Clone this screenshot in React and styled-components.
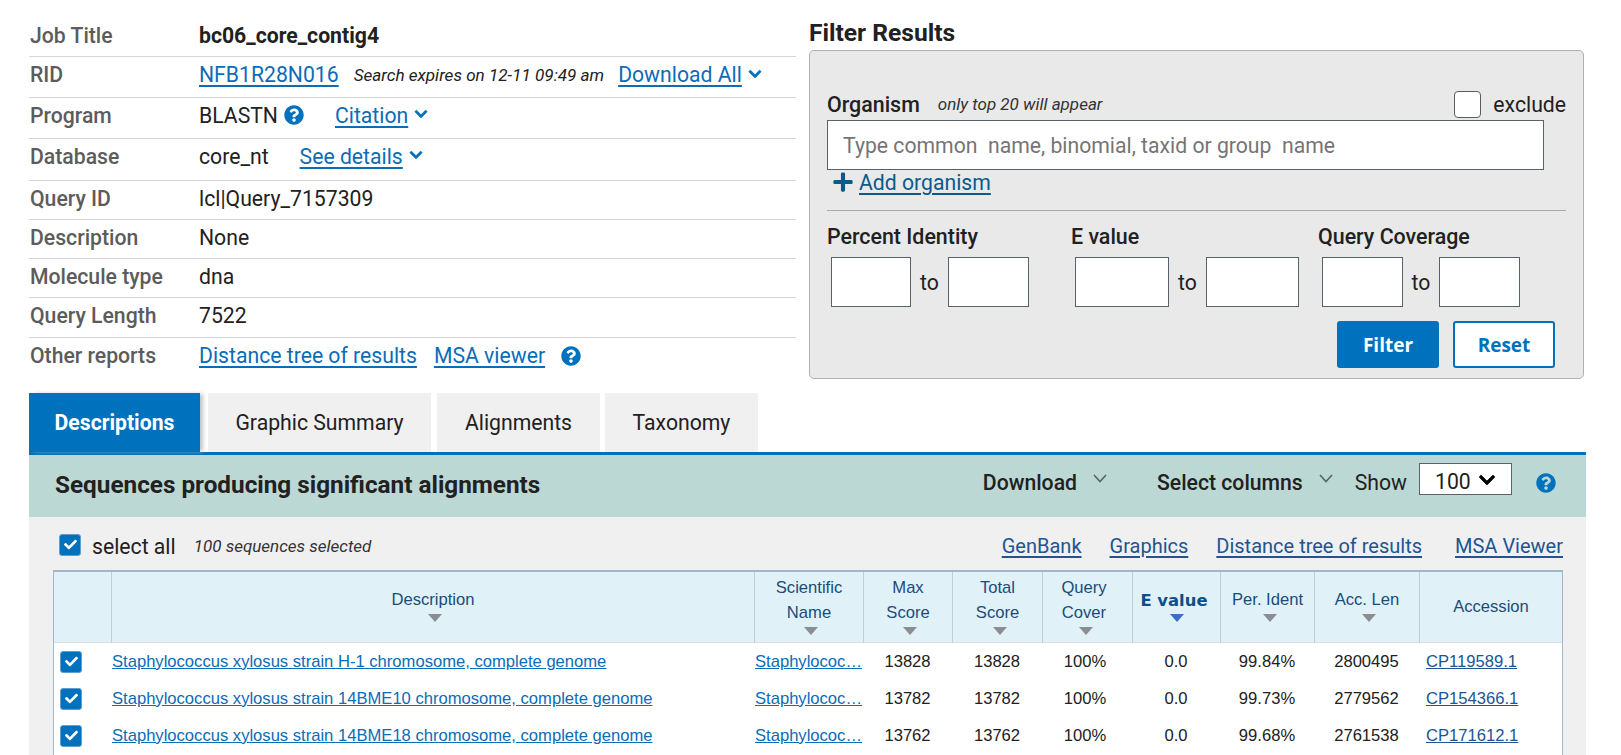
import React from "react";
import styled, { createGlobalStyle } from "styled-components";
import { FaQuestionCircle, FaChevronDown, FaCheck, FaPlus } from "react-icons/fa";

const blue = "#0071bc";
const linkBlue = "#0b6cb8";

const GlobalStyle = createGlobalStyle`
  html, body { margin: 0; padding: 0; background: #fff; }
  body { font-family: Roboto, "Liberation Sans", sans-serif; color: #212121; overflow: hidden; height: 755px; }
`;

const Page = styled.div`
  padding: 17px 35px 0 29px;
  box-sizing: border-box;
  width: 1621px;
  height: 755px;
  overflow: hidden;
`;

const Top = styled.div`
  display: flex;
  align-items: flex-start;
  gap: 13px;
`;

const Info = styled.div`
  width: 767px;
  flex: none;
`;

const InfoRow = styled.div`
  display: flex;
  align-items: center;
  height: ${(p) => p.$h}px;
  padding-bottom: ${(p) => p.$pb || 0}px;
  border-bottom: ${(p) => (p.$last ? "none" : "1px solid #d6d6d6")};
  font-size: 21.2px;
  box-sizing: border-box;
`;

const InfoLabel = styled.div`
  width: 170px;
  box-sizing: border-box;
  padding-left: 1px;
  flex: none;
  font-weight: 500;
  color: #5c5c5c;
`;

const InfoValue = styled.div`
  display: flex;
  align-items: center;
  font-weight: ${(p) => (p.$bold ? 700 : 400)};
  color: #212121;
`;

const Link = styled.a`
  color: ${linkBlue};
  text-decoration: underline;
  text-decoration-thickness: 2px;
  text-underline-offset: 3px;
  margin-left: ${(p) => p.$ml || 0}px;
  white-space: nowrap;
`;

const Note = styled.span`
  font-style: italic;
  font-size: 17.1px;
  margin-left: 15px;
  white-space: nowrap;
`;

const Chevron = styled(FaChevronDown)`
  color: ${blue};
  font-size: 14px;
  margin-left: 6px;
  margin-top: -2px;
  stroke: currentColor;
  stroke-width: 30;
`;

const Help = styled(FaQuestionCircle)`
  color: ${blue};
  font-size: 20px;
  flex: none;
  margin-left: ${(p) => p.$ml || 0}px;
`;

const FilterCol = styled.div`
  width: 775px;
  flex: none;
  margin-top: 3px;
`;

const FilterTitle = styled.h2`
  margin: 0 0 4px 0;
  font-size: 24.6px;
  line-height: 26px;
  font-weight: 700;
  color: #212121;
`;

const FilterBox = styled.div`
  box-sizing: border-box;
  height: 329px;
  background: #e9e9e9;
  border: 1px solid #aeb0b5;
  border-radius: 5px;
  padding: 37px 17px 0 17px;
`;

const OrganismHead = styled.div`
  display: flex;
  align-items: center;
  height: 32px;
`;

const FieldLabel = styled.div`
  font-size: 21.4px;
  font-weight: 500;
  color: #212121;
  white-space: nowrap;
`;

const OrgNote = styled.span`
  font-style: italic;
  font-size: 17px;
  margin-left: 18px;
  color: #333;
`;

const ExcludeBox = styled.span`
  width: 27px;
  height: 27px;
  box-sizing: border-box;
  background: #fff;
  border: 1px solid #5c5c5c;
  border-radius: 4px;
  margin-left: auto;
`;

const ExcludeText = styled.span`
  font-size: 21.2px;
  margin-left: 12px;
`;

const OrganismInput = styled.input`
  display: block;
  box-sizing: border-box;
  width: 717px;
  height: 50px;
  border: 1px solid #5b616b;
  padding: 0 15px;
  font: 400 21.2px Roboto, sans-serif;
  background: #fff;
  &::placeholder { color: #757575; opacity: 1; }
`;

const AddRow = styled.div`
  display: flex;
  align-items: center;
  box-sizing: border-box;
  height: 26px;
  padding: 0 0 2px 5px;
  font-size: 21.2px;
`;

const Plus = styled(FaPlus)`
  color: #0a5a8c;
  font-size: 22px;
  margin-right: 5px;
`;

const AddLink = styled.a`
  color: #0a5a8c;
  text-decoration: underline;
  text-decoration-thickness: 2px;
  text-underline-offset: 3px;
`;

const Divider = styled.div`
  border-top: 1px solid #a9a9a9;
  margin-top: 14px;
`;

const RangeLabels = styled.div`
  display: grid;
  grid-template-columns: 244px 247px auto;
  margin-top: 13px;
  height: 24px;
  align-items: center;
`;

const RangeRow = styled.div`
  display: flex;
  margin-top: 9px;
  padding-left: 4px;
  height: 50px;
`;

const RangeGroup = styled.div`
  display: flex;
  align-items: center;
  margin-right: ${(p) => p.$mr || 0}px;
`;

const RangeInput = styled.input`
  box-sizing: border-box;
  width: ${(p) => p.$w}px;
  height: 50px;
  border: 1px solid #5b616b;
  background: #fff;
  padding: 0;
`;

const To = styled.span`
  width: ${(p) => p.$w}px;
  text-align: center;
  font-size: 21.2px;
`;

const Buttons = styled.div`
  display: flex;
  justify-content: flex-end;
  gap: 14px;
  margin-top: 14px;
  padding-right: 11px;
`;

const Button = styled.button`
  width: 102px;
  height: 47px;
  box-sizing: border-box;
  border-radius: 3px;
  border: 2px solid ${blue};
  background: ${(p) => (p.$primary ? blue : "#fff")};
  color: ${(p) => (p.$primary ? "#fff" : blue)};
  font: 700 19px "Open Sans", sans-serif;
  padding: 0;
`;

const Tabs = styled.div`
  display: flex;
  margin-top: 14px;
  height: 59px;
`;

const Tab = styled.div`
  width: ${(p) => p.$w}px;
  margin-right: ${(p) => p.$mr || 0}px;
  display: flex;
  align-items: center;
  justify-content: center;
  font-size: 21.2px;
  font-weight: ${(p) => (p.$active ? 700 : 400)};
  background: ${(p) => (p.$active ? blue : "#f0f0f0")};
  color: ${(p) => (p.$active ? "#fff" : "#212121")};
  box-shadow: ${(p) => (p.$active ? "4px 0 4px -1px #c4c4c4" : "none")};
`;

const Results = styled.div`
  border-top: 3px solid ${blue};
  background: #f0f0f0;
`;

const Band = styled.div`
  height: 62px;
  box-sizing: border-box;
  background: #bcd8d4;
  display: flex;
  align-items: center;
  padding: 0 30px 6px 26px;
`;

const BandTitle = styled.h3`
  margin: 2px auto 0 0;
  font-size: 24.3px;
  font-weight: 700;
  color: #212121;
`;

const BandAction = styled.span`
  font-size: 21.2px;
  font-weight: 500;
  color: #212121;
  margin-top: -1px;
`;

const ThinChevronIcon = styled.svg`
  width: 14px;
  height: 9px;
  fill: none;
  stroke: #5b616b;
  stroke-width: 1.6;
  margin: -10px ${(p) => p.$mr}px 0 16px;
  flex: none;
`;

const ThinChevron = ({ $mr }) => (
  <ThinChevronIcon $mr={$mr} viewBox="0 0 14 9">
    <path d="M1 1l6 6.5L13 1" />
  </ThinChevronIcon>
);

const ShowLabel = styled.span`
  font-size: 21.2px;
  color: #212121;
  margin-top: -1px;
`;

const ShowSelect = styled.div`
  width: 93px;
  height: 32px;
  box-sizing: border-box;
  background: #fff;
  border: 1px solid #5b616b;
  margin: -8px 24px 0 12px;
  display: flex;
  align-items: center;
  padding: 5px 0 0 15px;
  font-size: 21.2px;
  gap: 7px;
`;

const SelectChevron = styled(FaChevronDown)`
  color: #000;
  font-size: 18px;
  margin-top: -4px;
  stroke: currentColor;
  stroke-width: 20;
`;

const Panel = styled.div`
  padding: 5px 23px 0 24px;
`;

const Toolbar = styled.div`
  display: flex;
  align-items: center;
  height: 48px;
  padding-left: 6px;
`;

const Check = styled.span`
  width: 22px;
  height: 22px;
  flex: none;
  box-sizing: border-box;
  border-radius: 3px;
  background: ${blue};
  border: 1px solid #5f9fd0;
  color: #fff;
  display: inline-flex;
  align-items: center;
  justify-content: center;
  font-size: 13px;
  margin-top: ${(p) => p.$mt || 0}px;
`;

const SelectAll = styled.span`
  font-size: 21.2px;
  margin-left: 11px;
`;

const SelectedNote = styled.span`
  font-size: 17px;
  font-style: italic;
  margin-left: 18px;
  color: #333;
`;

const ToolLinks = styled.div`
  margin-left: auto;
  display: flex;
  font-size: 20px;
`;

const ToolLink = styled.a`
  color: #205493;
  text-decoration: underline;
  text-decoration-thickness: 2px;
  text-underline-offset: 3px;
  margin-left: ${(p) => p.$ml || 0}px;
`;

const Table = styled.div`
  display: grid;
  grid-template-columns: 57px 643px 109px 89px 90px 90px 88px 94px 105px 1fr;
  border: 1px solid #9fb6cd;
  border-bottom: none;
  border-top-width: 2px;
  background: #fff;
  font-family: "Liberation Sans", Arial, sans-serif;
  font-size: 16.6px;
  height: 190px;
  overflow: hidden;
  grid-auto-rows: 37px;
  grid-template-rows: 71px;
`;

const Head = styled.div`
  background: #e1f1f8;
  border-left: ${(p) => (p.$first ? "none" : "1px solid #c2cdd6")};
  border-bottom: 1px solid #d6dee4;
  color: #1a4c7a;
  display: flex;
  flex-direction: column;
  align-items: center;
  justify-content: center;
  text-align: center;
  line-height: 25px;
  padding-bottom: ${(p) => p.$pb}px;
  padding-right: ${(p) => p.$pr || 0}px;
  box-sizing: border-box;
`;

const HeadBold = styled.span`
  font-family: "DejaVu Sans", sans-serif;
  font-weight: 700;
  font-size: 16.4px;
  color: #0b4f8a;
  line-height: 22px;
  white-space: nowrap;
  margin: 2px 5px 0 0;
`;

const Sort = styled.span`
  width: 0;
  height: 0;
  border-left: 7px solid transparent;
  border-right: 7px solid transparent;
  border-top: 8px solid ${(p) => (p.$on ? "#3a6fc4" : "#8a8d92")};
  margin: 2px 0 0 ${(p) => (p.$on ? 0 : 4)}px;
`;

const Cell = styled.div`
  display: flex;
  align-items: center;
  justify-content: ${(p) => p.$align || "center"};
  padding-left: ${(p) => p.$pl || 0}px;
  padding-right: ${(p) => p.$pr || 0}px;
  min-width: 0;
  white-space: nowrap;
  overflow: hidden;
  color: #212121;
`;

const RowLink = styled.a`
  color: ${linkBlue};
  text-decoration: underline;
  white-space: nowrap;
`;

const AccLink = styled.a`
  color: #205493;
  text-decoration: underline;
`;

const columns = [
  { label: ["Description"], sort: true },
  { label: ["Scientific", "Name"], sort: true },
  { label: ["Max", "Score"], sort: true },
  { label: ["Total", "Score"], sort: true },
  { label: ["Query", "Cover"], sort: true, pr: 7 },
  { bold: "E value", sort: true, on: true },
  { label: ["Per. Ident"], sort: true },
  { label: ["Acc. Len"], sort: true },
  { label: ["Accession"] },
];

const rows = [
  ["Staphylococcus xylosus strain H-1 chromosome, complete genome", "13828", "99.84%", "2800495", "CP119589.1"],
  ["Staphylococcus xylosus strain 14BME10 chromosome, complete genome", "13782", "99.73%", "2779562", "CP154366.1"],
  ["Staphylococcus xylosus strain 14BME18 chromosome, complete genome", "13762", "99.68%", "2761538", "CP171612.1"],
];

const App = () => (
  <Page>
    <GlobalStyle />
    <Top>
      <Info>
        <InfoRow $h={40} $pb={2}>
          <InfoLabel>Job Title</InfoLabel>
          <InfoValue $bold>bc06_core_contig4</InfoValue>
        </InfoRow>
        <InfoRow $h={41} $pb={5}>
          <InfoLabel>RID</InfoLabel>
          <InfoValue>
            <Link>NFB1R28N016</Link>
            <Note>Search expires on 12-11 09:49 am</Note>
            <Link $ml={14}>Download All</Link>
            <Chevron />
          </InfoValue>
        </InfoRow>
        <InfoRow $h={41} $pb={6}>
          <InfoLabel>Program</InfoLabel>
          <InfoValue>
            BLASTN
            <Help $ml={6} />
            <Link $ml={31}>Citation</Link>
            <Chevron />
          </InfoValue>
        </InfoRow>
        <InfoRow $h={42} $pb={7}>
          <InfoLabel>Database</InfoLabel>
          <InfoValue>
            core_nt
            <Link $ml={31}>See details</Link>
            <Chevron />
          </InfoValue>
        </InfoRow>
        <InfoRow $h={39} $pb={3}>
          <InfoLabel>Query ID</InfoLabel>
          <InfoValue>lcl|Query_7157309</InfoValue>
        </InfoRow>
        <InfoRow $h={39} $pb={3}>
          <InfoLabel>Description</InfoLabel>
          <InfoValue>None</InfoValue>
        </InfoRow>
        <InfoRow $h={39} $pb={3}>
          <InfoLabel>Molecule type</InfoLabel>
          <InfoValue>dna</InfoValue>
        </InfoRow>
        <InfoRow $h={40} $pb={4}>
          <InfoLabel>Query Length</InfoLabel>
          <InfoValue>7522</InfoValue>
        </InfoRow>
        <InfoRow $h={39} $pb={4} $last>
          <InfoLabel>Other reports</InfoLabel>
          <InfoValue>
            <Link>Distance tree of results</Link>
            <Link $ml={17}>MSA viewer</Link>
            <Help $ml={16} />
          </InfoValue>
        </InfoRow>
      </Info>
      <FilterCol>
        <FilterTitle>Filter Results</FilterTitle>
        <FilterBox>
          <OrganismHead>
            <FieldLabel>Organism</FieldLabel>
            <OrgNote>only top 20 will appear</OrgNote>
            <ExcludeBox />
            <ExcludeText>exclude</ExcludeText>
          </OrganismHead>
          <OrganismInput placeholder="Type common  name, binomial, taxid or group  name" />
          <AddRow>
            <Plus />
            <AddLink>Add organism</AddLink>
          </AddRow>
          <Divider />
          <RangeLabels>
            <FieldLabel>Percent Identity</FieldLabel>
            <FieldLabel>E value</FieldLabel>
            <FieldLabel>Query Coverage</FieldLabel>
          </RangeLabels>
          <RangeRow>
            <RangeGroup $mr={46}>
              <RangeInput $w={80} />
              <To $w={37}>to</To>
              <RangeInput $w={81} />
            </RangeGroup>
            <RangeGroup $mr={23}>
              <RangeInput $w={94} />
              <To $w={37}>to</To>
              <RangeInput $w={93} />
            </RangeGroup>
            <RangeGroup>
              <RangeInput $w={81} />
              <To $w={36}>to</To>
              <RangeInput $w={81} />
            </RangeGroup>
          </RangeRow>
          <Buttons>
            <Button $primary>Filter</Button>
            <Button>Reset</Button>
          </Buttons>
        </FilterBox>
      </FilterCol>
    </Top>
    <Tabs>
      <Tab $active $w={171} $mr={8}>Descriptions</Tab>
      <Tab $w={223} $mr={6}>Graphic Summary</Tab>
      <Tab $w={163} $mr={5}>Alignments</Tab>
      <Tab $w={153}>Taxonomy</Tab>
    </Tabs>
    <Results>
      <Band>
        <BandTitle>Sequences producing significant alignments</BandTitle>
        <BandAction>Download</BandAction>
        <ThinChevron $mr={50} />
        <BandAction>Select columns</BandAction>
        <ThinChevron $mr={22} />
        <ShowLabel>Show</ShowLabel>
        <ShowSelect>
          100
          <SelectChevron />
        </ShowSelect>
        <Help />
      </Band>
      <Panel>
        <Toolbar>
          <Check $mt={-3}><FaCheck /></Check>
          <SelectAll>select all</SelectAll>
          <SelectedNote>100 sequences selected</SelectedNote>
          <ToolLinks>
            <ToolLink>GenBank</ToolLink>
            <ToolLink $ml={28}>Graphics</ToolLink>
            <ToolLink $ml={28}>Distance tree of results</ToolLink>
            <ToolLink $ml={33}>MSA Viewer</ToolLink>
          </ToolLinks>
        </Toolbar>
        <Table>
          <Head $first $pb={0} />
          {columns.map((col, idx) => (
            <Head key={`head-${idx}`} $pb={col.sort ? 5 : 1} $pr={col.pr}>
              {col.bold && <HeadBold>{col.bold}</HeadBold>}
              {col.label && col.label.map((line) => <span key={line}>{line}</span>)}
              {col.sort && <Sort $on={col.on} />}
            </Head>
          ))}
          {rows.map((row) => (
            <React.Fragment key={row[4]}>
              <Cell $align="flex-start" $pl={6}><Check><FaCheck /></Check></Cell>
              <Cell $align="flex-start" $pl={1}><RowLink>{row[0]}</RowLink></Cell>
              <Cell $align="flex-start" $pl={1}><RowLink>Staphylococ…</RowLink></Cell>
              <Cell>{row[1]}</Cell>
              <Cell>{row[1]}</Cell>
              <Cell $pr={4}>100%</Cell>
              <Cell>0.0</Cell>
              <Cell>{row[2]}</Cell>
              <Cell>{row[3]}</Cell>
              <Cell $align="flex-start" $pl={7}><AccLink>{row[4]}</AccLink></Cell>
            </React.Fragment>
          ))}
        </Table>
      </Panel>
    </Results>
  </Page>
);

export default App;
